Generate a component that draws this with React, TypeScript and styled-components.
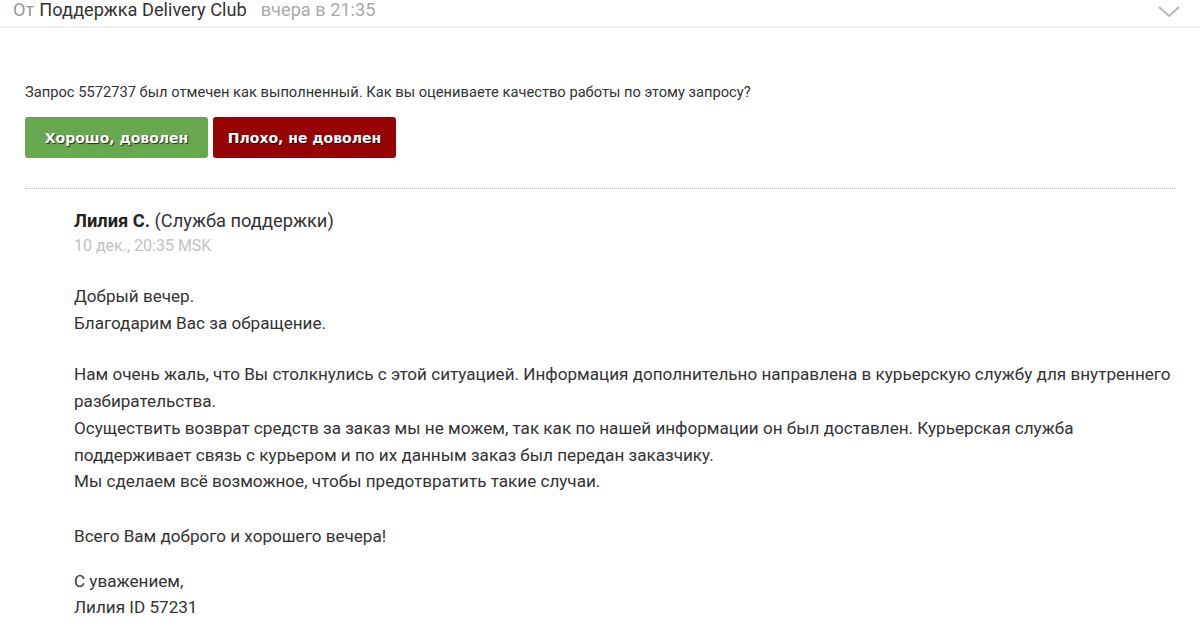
import React from 'react';
import styled, { createGlobalStyle } from 'styled-components';

const GlobalStyle = createGlobalStyle`
    html, body {
        margin: 0;
        padding: 0;
        background: #fff;
        font-family: Roboto, "Liberation Sans", sans-serif;
        overflow: hidden;
    }
`;

const Page = styled.div`
    width: 1200px;
    height: 628px;
    overflow: hidden;
    background: #fff;
`;

const Header = styled.div`
    display: flex;
    align-items: center;
    justify-content: space-between;
    height: 34px;
    margin-top: -8px;
    padding: 0 20px 0 13px;
    border-bottom: 2px solid #f2f2f2;
`;

const From = styled.div`
    display: flex;
    align-items: baseline;
    gap: 5px;
    font-size: 18.2px;
    color: #999;
`;

const Sender = styled.span`
    color: #333;
`;

const When = styled.span`
    color: #aaa;
    margin-left: 9px;
`;

const ChevronWrap = styled.div`
    display: flex;
    margin-top: 5px;
`;

const Body = styled.div`
    padding: 55px 25px 0 25px;
`;

const Question = styled.div`
    font-size: 14.7px;
    color: #333;
    line-height: 18px;
`;

const Buttons = styled.div`
    display: flex;
    gap: 5px;
    margin-top: 16px;
`;

const RateBtn = styled.button<{ $good?: boolean }>`
    height: 41px;
    width: 183px;
    border: none;
    border-radius: 3px;
    background-color: ${p => (p.$good ? '#68a84f' : '#970404')};
    color: #fff;
    font-family: "DejaVu Sans", Verdana, sans-serif;
    font-weight: bold;
    font-size: 14px;
    text-shadow: 1px 1px 1px rgba(0, 0, 0, 0.7);
    padding: 0;
`;

const Divider = styled.div`
    margin-top: 30px;
    border-top: 1px dotted #bbb;
    width: 1150px;
`;

const Message = styled.div`
    padding: 20px 0 0 49px;
    color: #333;
`;

const Author = styled.div`
    font-size: 18.3px;
    line-height: 24px;
`;

const Name = styled.b`
    font-weight: bold;
    color: #222;
`;

const Stamp = styled.div`
    font-size: 16px;
    color: #c2c2c2;
    margin-top: 3px;
    line-height: 20px;
`;

const Text = styled.div`
    margin-top: 27px;
    font-size: 17.1px;
    line-height: 26.7px;
    width: 1105px;
`;

const Para = styled.p<{ $after?: number }>`
    margin: 0 0 ${p => p.$after ?? 26}px 0;
`;

function Chevron() {
    return (
        <ChevronWrap>
            <svg width="22" height="12" viewBox="0 0 22 12">
                <path d="M1 1 L11 10 L21 1" fill="none" stroke="#b5b5b5" strokeWidth="2" />
            </svg>
        </ChevronWrap>
    );
}

export default function App() {
    return (
        <Page>
            <GlobalStyle />
            <Header>
                <From>
                    От <Sender>Поддержка Delivery Club</Sender>
                    <When>вчера в 21:35</When>
                </From>
                <Chevron />
            </Header>
            <Body>
                <Question>
                    Запрос 5572737 был отмечен как выполненный. Как вы оцениваете качество работы по этому запросу?
                </Question>
                <Buttons>
                    <RateBtn $good>Хорошо, доволен</RateBtn>
                    <RateBtn>Плохо, не доволен</RateBtn>
                </Buttons>
                <Divider />
                <Message>
                    <Author>
                        <Name>Лилия С.</Name> (Служба поддержки)
                    </Author>
                    <Stamp>10 дек., 20:35 MSK</Stamp>
                    <Text>
                        <Para $after={25}>
                            Добрый вечер.
                            <br />
                            Благодарим Вас за обращение.
                        </Para>
                        <Para $after={28}>
                            Нам очень жаль, что Вы столкнулись с этой ситуацией. Информация дополнительно направлена в курьерскую службу для внутреннего разбирательства.
                            <br />
                            Осуществить возврат средств за заказ мы не можем, так как по нашей информации он был доставлен. Курьерская служба поддерживает связь с курьером и по их данным заказ был передан заказчику.
                            <br />
                            Мы сделаем всё возможное, чтобы предотвратить такие случаи.
                        </Para>
                        <Para $after={18}>Всего Вам доброго и хорошего вечера!</Para>
                        <Para>
                            С уважением,
                            <br />
                            Лилия ID 57231
                        </Para>
                    </Text>
                </Message>
            </Body>
        </Page>
    );
}
